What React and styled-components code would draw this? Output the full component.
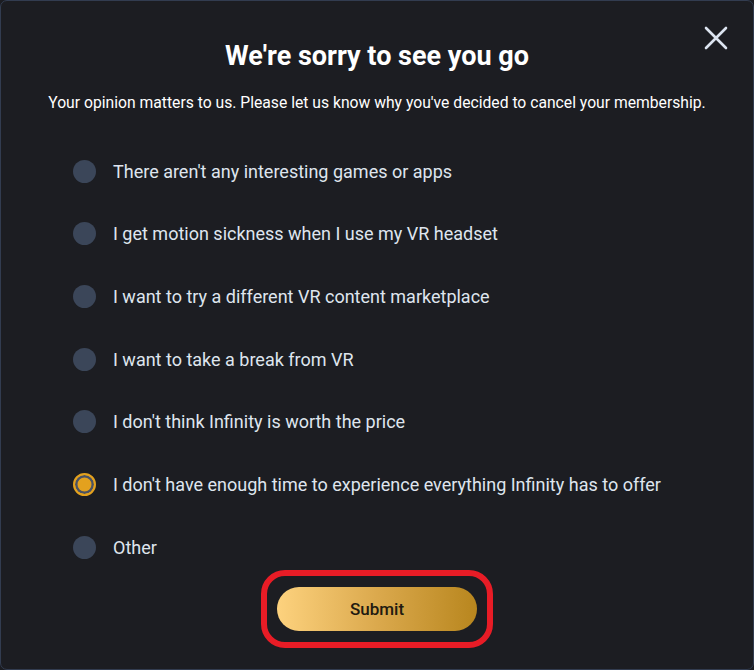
import React, { useState } from "react"
import styled, { createGlobalStyle } from "styled-components"

const reasons = [
    "There aren't any interesting games or apps",
    "I get motion sickness when I use my VR headset",
    "I want to try a different VR content marketplace",
    "I want to take a break from VR",
    "I don't think Infinity is worth the price",
    "I don't have enough time to experience everything Infinity has to offer",
    "Other",
]

const App = () =>
{
    const [picked, setPicked] = useState(5)

    return(
        <>
            <GlobalStyle />
            <Modal>
                <CloseButton aria-label="Close">
                    <svg width="24" height="24" viewBox="0 0 24 24">
                        <path d="M2 2 L22 22 M22 2 L2 22" stroke="#dce4f0" strokeWidth="2.6" strokeLinecap="round" />
                    </svg>
                </CloseButton>

                <Title>We're sorry to see you go</Title>
                <Subtitle>
                    Your opinion matters to us. Please let us know why you've decided to cancel your membership.
                </Subtitle>

                <ReasonList>
                    {reasons.map((text, i) => (
                        <Reason key={i} onClick={() => setPicked(i)}>
                            <Radio $checked={picked === i} />
                            <span>{text}</span>
                        </Reason>
                    ))}
                </ReasonList>

                <Highlight>
                    <SubmitButton>Submit</SubmitButton>
                </Highlight>
            </Modal>
        </>
    )
}

const GlobalStyle = createGlobalStyle`
    html, body
    {
        margin: 0;
        padding: 0;
        background: #1c1d22;
    }

    body
    {
        font-family: Roboto, "Liberation Sans", sans-serif;
    }
`

const Modal = styled.div`
    position: relative;
    box-sizing: border-box;
    width: 754px;
    height: 670px;
    background: #1c1d22;
    border: 1px solid #323c50;
    border-radius: 7px;
    display: flex;
    flex-direction: column;
    align-items: center;
    padding-top: 39px;
`

const CloseButton = styled.button`
    position: absolute;
    top: 25px;
    right: 25px;
    width: 24px;
    height: 24px;
    padding: 0;
    border: none;
    background: none;
    cursor: pointer;

    svg
    {
        display: block;
    }
`

const Title = styled.h1`
    margin: 0;
    font-size: 27px;
    line-height: 32px;
    font-weight: 700;
    color: #ffffff;
`

const Subtitle = styled.p`
    margin: 21px 0 0;
    font-size: 15.7px;
    line-height: 20px;
    color: #ffffff;
`

const ReasonList = styled.div`
    align-self: stretch;
    display: flex;
    flex-direction: column;
    gap: 38.7px;
    margin-top: 46px;
    padding-left: 72px;
`

const Reason = styled.label`
    display: flex;
    align-items: center;
    gap: 17px;
    height: 24px;
    font-size: 18px;
    color: #dfe5ee;
    cursor: pointer;
`

const Radio = styled.span`
    box-sizing: border-box;
    flex: none;
    width: 23px;
    height: 23px;
    border-radius: 50%;
    background: ${p => p.$checked ? "#e3a11e" : "#3b4659"};
    border: ${p => p.$checked ? "2px solid #e3a11e" : "none"};
    box-shadow: ${p => p.$checked ? "inset 0 0 0 2.5px #4a5264" : "none"};
`

const Highlight = styled.div`
    margin-top: 11px;
    padding: 11px 10px;
    border: 6px solid #e81c26;
    border-radius: 24px;
`

const SubmitButton = styled.button`
    display: block;
    width: 200px;
    height: 44px;
    border: none;
    border-radius: 22px;
    background: linear-gradient(90deg, #fdd27e 0%, #dba94d 50%, #b8861e 100%);
    color: #221a10;
    font-family: Roboto, "Liberation Sans", sans-serif;
    font-size: 17px;
    font-weight: 500;
    cursor: pointer;
`

export default App
